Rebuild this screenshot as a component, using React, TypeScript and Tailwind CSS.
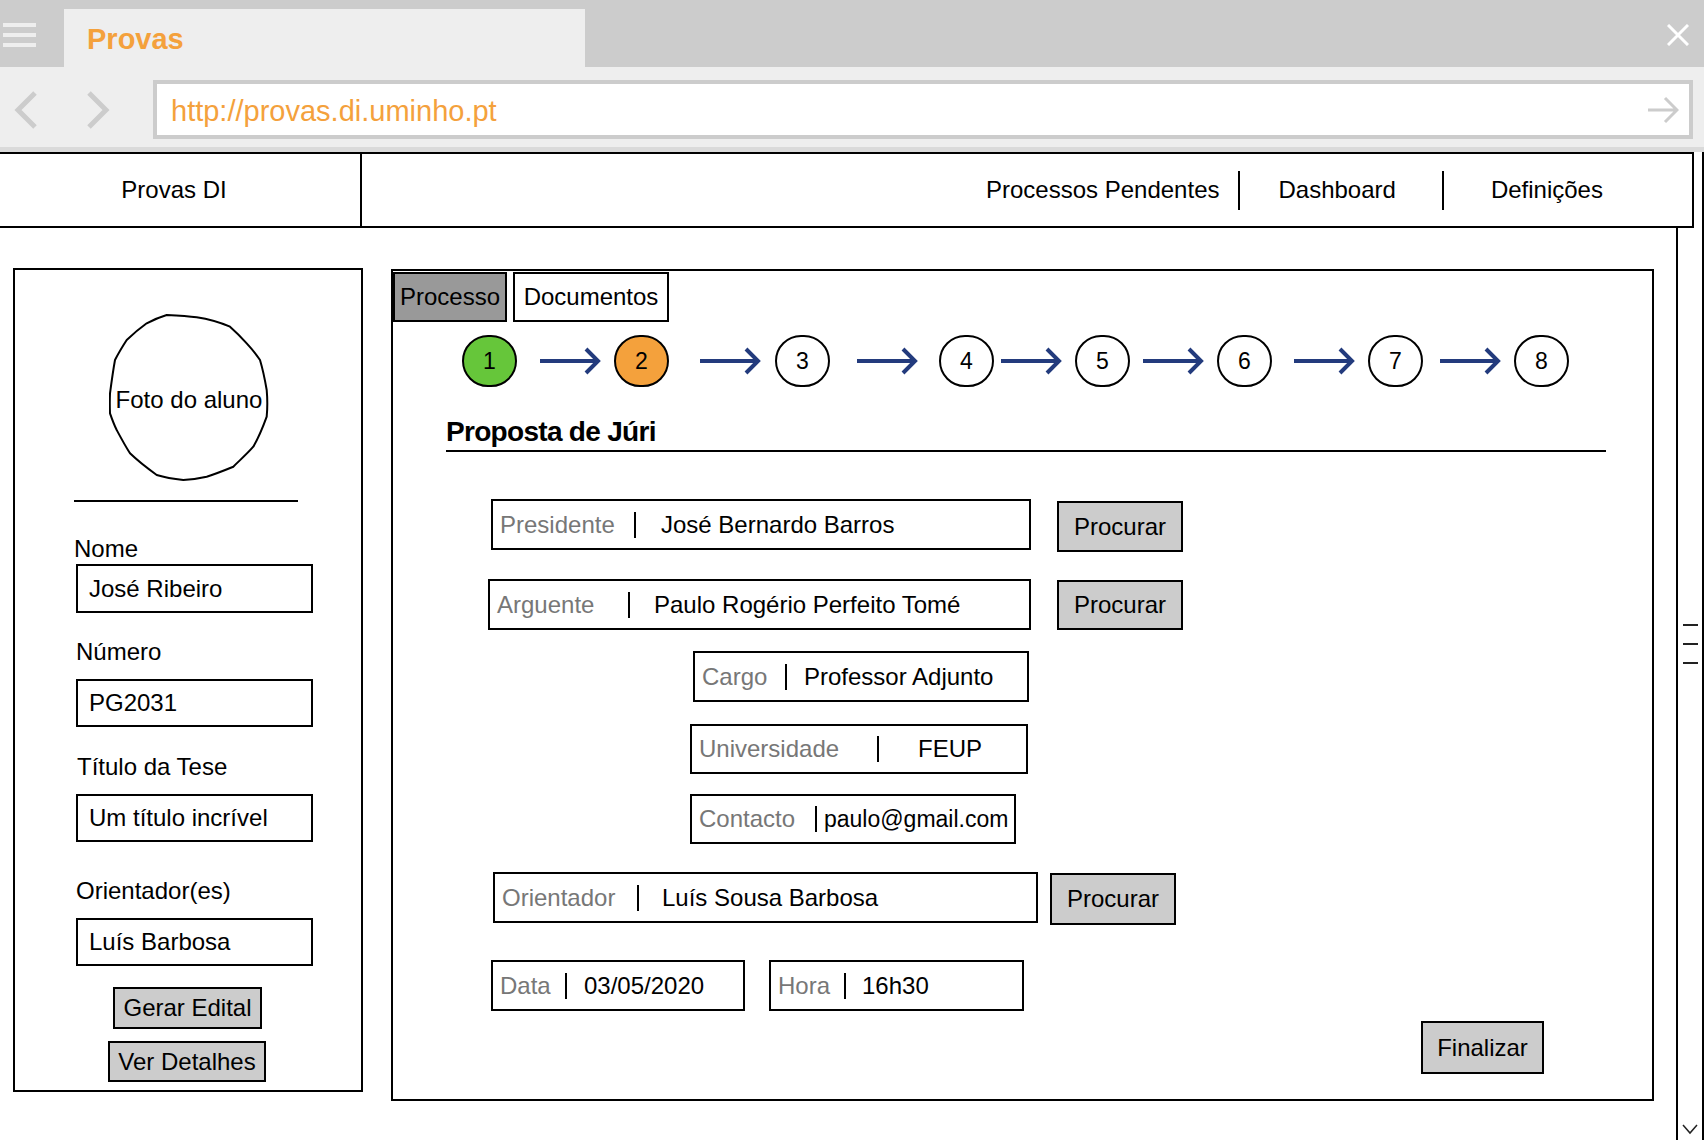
import React from "react";

const STEPS = [
  { n: "1", bg: "bg-[#66c63a]", ml: "ml-[69px]", arrow: "ml-[23px]" },
  { n: "2", bg: "bg-[#f4a13c]", ml: "ml-[13px]", arrow: "ml-[31px]" },
  { n: "3", bg: "bg-white", ml: "ml-[14px]", arrow: "ml-[27px]" },
  { n: "4", bg: "bg-white", ml: "ml-[21px]", arrow: "ml-[7px]" },
  { n: "5", bg: "bg-white", ml: "ml-[13px]", arrow: "ml-[13px]" },
  { n: "6", bg: "bg-white", ml: "ml-[13px]", arrow: "ml-[22px]" },
  { n: "7", bg: "bg-white", ml: "ml-[13px]", arrow: "ml-[17px]" },
  { n: "8", bg: "bg-white", ml: "ml-[13px]", arrow: "" },
];

function StepArrow({ className }: { className: string }) {
  return (
    <svg className={className} width="61" height="30" viewBox="0 0 61 30" fill="none">
      <path d="M0 15H57" stroke="#233b7d" strokeWidth="4" />
      <path d="M46 3L58 15L46 27" stroke="#233b7d" strokeWidth="4" />
    </svg>
  );
}

function Field({
  box,
  labelW,
  label,
  valueMl,
  value,
  valueSize = "text-[24px]",
}: {
  box: string;
  labelW: string;
  label: string;
  valueMl: string;
  value: string;
  valueSize?: string;
}) {
  return (
    <div className={`flex items-center border-2 border-black bg-white pl-[7px] ${box}`}>
      <span className={`text-[24px] text-[#777777] whitespace-nowrap ${labelW}`}>{label}</span>
      <span className="h-[26px] w-[2px] bg-black shrink-0" />
      <span className={`whitespace-nowrap text-black ${valueSize} ${valueMl}`}>{value}</span>
    </div>
  );
}

function Btn({ className, children }: { className: string; children: React.ReactNode }) {
  return (
    <button
      type="button"
      className={`flex items-center justify-center border-2 border-black bg-[#cccccc] text-[24px] text-black ${className}`}
    >
      {children}
    </button>
  );
}

function SideInput({ className, value }: { className: string; value: string }) {
  return (
    <div className={`ml-[61px] flex w-[237px] items-center border-2 border-black pl-[11px] text-[24px] ${className}`}>
      {value}
    </div>
  );
}

export default function App() {
  return (
    <div className="relative h-[1140px] w-[1704px] overflow-hidden bg-white font-['Liberation_Sans',Arial,sans-serif] text-black">
      {/* browser tab bar */}
      <div className="flex h-[67px] bg-[#cccccc]">
        <div className="flex w-[64px] flex-col gap-[6px] pl-[3px] pt-[23px]">
          <span className="h-[4px] w-[33px] bg-[#eeeeee]" />
          <span className="h-[4px] w-[33px] bg-[#eeeeee]" />
          <span className="h-[4px] w-[33px] bg-[#eeeeee]" />
        </div>
        <div className="mt-[9px] flex h-[58px] w-[521px] items-center bg-[#eeeeee] pl-[23px] pt-[4px] text-[29px] font-bold text-[#f4a13c]">
          Provas
        </div>
        <svg className="ml-auto mr-[15px] mt-[24px]" width="22" height="22" viewBox="0 0 22 22">
          <path d="M1 1L21 21M21 1L1 21" stroke="#ffffff" strokeWidth="3" />
        </svg>
      </div>

      {/* address bar */}
      <div className="flex h-[80px] items-start bg-[#eeeeee] pt-[13px]">
        <div className="flex h-[59px] items-center">
          <svg className="ml-[13px]" width="26" height="40" viewBox="0 0 26 40" fill="none">
            <path d="M22 3L5 20L22 37" stroke="#cccccc" strokeWidth="5" />
          </svg>
          <svg className="ml-[46px]" width="26" height="40" viewBox="0 0 26 40" fill="none">
            <path d="M4 3L21 20L4 37" stroke="#cccccc" strokeWidth="5" />
          </svg>
        </div>
        <div className="ml-[42px] flex h-[59px] w-[1540px] items-center justify-between border-4 border-[#cccccc] bg-white pl-[14px] pr-[10px]">
          <span className="pt-[5px] text-[29px] text-[#f4a13c]">http://provas.di.uminho.pt</span>
          <svg width="31" height="28" viewBox="0 0 31 28" fill="none">
            <path d="M0 14H29M17 2L29 14L17 26" stroke="#cccccc" strokeWidth="3" />
          </svg>
        </div>
      </div>
      <div className="h-[5px] bg-[#dadada]" />

      {/* app area */}
      <div className="border-r-2 border-black">
        {/* navbar */}
        <div className="flex h-[76px] w-[1694px] items-center border-2 border-l-0 border-black text-[24px]">
          <div className="flex h-full w-[362px] items-center justify-center border-r-2 border-black pr-[12px]">
            Provas DI
          </div>
          <span className="ml-[624px] whitespace-nowrap">Processos Pendentes</span>
          <span className="ml-[19px] h-[39px] w-[2px] bg-black" />
          <span className="ml-[38px]">Dashboard</span>
          <span className="ml-[46px] h-[39px] w-[2px] bg-black" />
          <span className="ml-[47px]">Definições</span>
        </div>

        <div className="flex h-[912px]">
          <div className="flex w-[1676px] items-start">
            {/* student sidebar */}
            <aside className="ml-[13px] mt-[40px] flex h-[824px] w-[350px] flex-col border-2 border-black">
              <div className="relative ml-[94px] mt-[43px] h-[168px] w-[160px]">
                <svg width="160" height="168" viewBox="0 0 160 168" fill="none">
                  <path
                    d="M57.7 2C68 2.5 78 3 87.7 4.3C99 6 110 9 121 13.7C127 19 132 24 137.7 30.3C143 36 147 41 151 47C154 57 156 67 157.7 77C158.5 86 158.5 95 157.7 103.7C154 114 150 124 144.3 133.7C138 141 131 147 124.3 153.7C115 157.5 106 161 97.7 163.7C90 165.5 82 166.5 74.3 167C65 166 56 164.5 47.7 162C38 155 29 148 21 140.3C16 132.5 12 125 7.7 117C5 111.5 3 106 1 100.3C0.7 93.5 0.7 87 1 80.3C2.5 69 4 58 6 47C9.5 40 13.5 33.5 17.7 27C24 21 30.5 15.5 37.7 10.3C44 7 51 4 57.7 2Z"
                    stroke="#000"
                    strokeWidth="2"
                    strokeLinejoin="round"
                  />
                </svg>
                <div className="absolute inset-0 flex items-center justify-center whitespace-nowrap pt-[6px] text-[24px]">
                  Foto do aluno
                </div>
              </div>
              <div className="ml-[59px] mt-[19px] h-[2px] w-[224px] bg-black" />
              <div className="ml-[59px] mt-[34px] text-[24px] leading-[26px]">Nome</div>
              <SideInput className="mt-[2px] h-[49px]" value="José Ribeiro" />
              <div className="ml-[61px] mt-[26px] text-[24px] leading-[26px]">Número</div>
              <SideInput className="mt-[14px] h-[48px]" value="PG2031" />
              <div className="ml-[62px] mt-[27px] text-[24px] leading-[26px]">Título da Tese</div>
              <SideInput className="mt-[14px] h-[48px]" value="Um título incrível" />
              <div className="ml-[61px] mt-[36px] text-[24px] leading-[26px]">Orientador(es)</div>
              <SideInput className="mt-[14px] h-[48px]" value="Luís Barbosa" />
              <Btn className="ml-[98px] mt-[21px] h-[42px] w-[149px]">Gerar Edital</Btn>
              <Btn className="ml-[93px] mt-[12px] h-[41px] w-[158px]">Ver Detalhes</Btn>
            </aside>

            {/* process panel */}
            <main className="ml-[28px] mt-[41px] flex h-[832px] w-[1263px] flex-col border-2 border-black">
              <div className="mt-[1px] flex gap-[6px] text-[24px]">
                <div className="flex h-[50px] w-[114px] items-center justify-center border-2 border-black bg-[#999999]">
                  Processo
                </div>
                <div className="flex h-[50px] w-[156px] items-center justify-center border-2 border-black bg-white">
                  Documentos
                </div>
              </div>

              <div className="mt-[13px] flex h-[52px] items-center">
                {STEPS.map((s) => (
                  <React.Fragment key={s.n}>
                    <div
                      className={`flex h-[52px] w-[55px] shrink-0 items-center justify-center rounded-full border-2 border-black text-[23px] ${s.bg} ${s.ml}`}
                    >
                      {s.n}
                    </div>
                    {s.arrow && <StepArrow className={`shrink-0 ${s.arrow}`} />}
                  </React.Fragment>
                ))}
              </div>

              <h2 className="ml-[53px] mt-[27px] h-[38px] w-[1160px] border-b-2 border-black text-[28px] font-bold leading-[36px] tracking-tight">
                Proposta de Júri
              </h2>

              <div className="mt-[47px] flex items-start">
                <Field box="ml-[98px] h-[51px] w-[540px]" labelW="w-[134px]" label="Presidente" valueMl="ml-[25px]" value="José Bernardo Barros" />
                <Btn className="ml-[26px] mt-[2px] h-[51px] w-[126px]">Procurar</Btn>
              </div>

              <div className="mt-[27px] flex items-start">
                <Field box="ml-[95px] h-[51px] w-[543px]" labelW="w-[131px]" label="Arguente" valueMl="ml-[24px]" value="Paulo Rogério Perfeito Tomé" />
                <Btn className="ml-[26px] mt-[1px] h-[50px] w-[126px]">Procurar</Btn>
              </div>

              <div className="mt-[21px] flex">
                <Field box="ml-[300px] h-[51px] w-[336px]" labelW="w-[83px]" label="Cargo" valueMl="ml-[17px]" value="Professor Adjunto" />
              </div>
              <div className="mt-[22px] flex">
                <Field box="ml-[297px] h-[50px] w-[338px]" labelW="w-[178px]" label="Universidade" valueMl="ml-[39px]" value="FEUP" />
              </div>
              <div className="mt-[20px] flex">
                <Field
                  box="ml-[297px] h-[50px] w-[326px]"
                  labelW="w-[116px]"
                  label="Contacto"
                  valueMl="ml-[7px]"
                  value="paulo@gmail.com"
                  valueSize="text-[23px]"
                />
              </div>

              <div className="mt-[28px] flex items-start">
                <Field box="ml-[100px] h-[51px] w-[545px]" labelW="w-[135px]" label="Orientador" valueMl="ml-[23px]" value="Luís Sousa Barbosa" />
                <Btn className="ml-[12px] mt-[1px] h-[52px] w-[126px]">Procurar</Btn>
              </div>

              <div className="mt-[35px] flex items-start">
                <Field box="ml-[98px] h-[51px] w-[254px]" labelW="w-[65px]" label="Data" valueMl="ml-[17px]" value="03/05/2020" />
                <Field box="ml-[24px] h-[51px] w-[255px]" labelW="w-[66px]" label="Hora" valueMl="ml-[16px]" value="16h30" />
              </div>

              <Btn className="ml-[1028px] mt-[10px] h-[53px] w-[123px]">Finalizar</Btn>
            </main>
          </div>

          {/* scrollbar */}
          <div className="flex w-[26px] flex-col items-center border-l-2 border-black">
            <div className="mt-[396px] flex flex-col gap-[17px]">
              <span className="h-[2px] w-[15px] bg-[#222]" />
              <span className="h-[2px] w-[15px] bg-[#222]" />
              <span className="h-[2px] w-[15px] bg-[#222]" />
            </div>
            <svg className="mt-auto mb-[5px]" width="16" height="12" viewBox="0 0 16 12" fill="none">
              <path d="M1 2L8 10L15 2" stroke="#222" strokeWidth="1.5" />
            </svg>
          </div>
        </div>
      </div>
    </div>
  );
}
